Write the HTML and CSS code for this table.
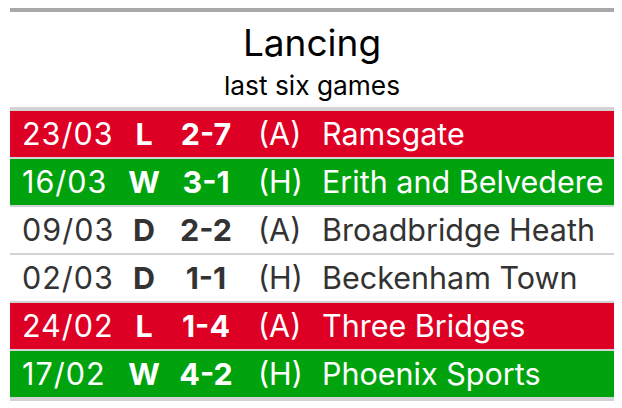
FILE: index.html
```html
<!DOCTYPE html>
<html>
<head>
<meta charset="utf-8">
<link rel="stylesheet" href="styles.css">
</head>
<body>
<div class="card">
  <div class="heading">
    <div class="title">Lancing</div>
    <div class="subtitle">last six games</div>
  </div>
  <table class="games">
    <colgroup>
      <col class="c-date"><col class="c-res"><col class="c-score"><col class="c-venue"><col class="c-team">
    </colgroup>
    <tbody>
      <tr class="loss"><td class="date">23/03</td><td class="res">L</td><td class="score">2-7</td><td class="venue">(A)</td><td class="team">Ramsgate</td></tr>
      <tr class="win"><td class="date">16/03</td><td class="res">W</td><td class="score">3-1</td><td class="venue">(H)</td><td class="team">Erith and Belvedere</td></tr>
      <tr class="draw"><td class="date">09/03</td><td class="res">D</td><td class="score">2-2</td><td class="venue">(A)</td><td class="team">Broadbridge Heath</td></tr>
      <tr class="draw"><td class="date">02/03</td><td class="res">D</td><td class="score">1-1</td><td class="venue">(H)</td><td class="team">Beckenham Town</td></tr>
      <tr class="loss"><td class="date">24/02</td><td class="res">L</td><td class="score">1-4</td><td class="venue">(A)</td><td class="team">Three Bridges</td></tr>
      <tr class="win"><td class="date">17/02</td><td class="res">W</td><td class="score">4-2</td><td class="venue">(H)</td><td class="team">Phoenix Sports</td></tr>
    </tbody>
  </table>
</div>
</body>
</html>
```

FILE: styles.css
```css
html, body {
  margin: 0;
  padding: 0;
  background: #ffffff;
}
body {
  font-family: "Inter", "Roboto", "Liberation Sans", sans-serif;
}
.card {
  margin: 8px 0 0 10px;
  width: 604px;
  border-top: 4px solid #a8a8a8;
}
.heading {
  text-align: center;
  color: #000;
  border-bottom: 4px solid #d3d3d3;
  height: 99px;
  box-sizing: border-box;
  padding-top: 10px;
}
.title {
  font-size: 37px;
  line-height: 42px;
  font-weight: 400;
  margin-bottom: 5px;
}
.subtitle {
  font-size: 26.3px;
  line-height: 34px;
  font-weight: 400;
}
.games {
  width: 604px;
  border-collapse: collapse;
  table-layout: fixed;
  border-bottom: 4px solid #d3d3d3;
}
.c-date { width: 110px; }
.c-res { width: 48px; }
.c-score { width: 76px; }
.c-venue { width: 78px; }
.c-team { width: auto; }
.games td {
  height: 46px;
  padding: 0;
  font-size: 30.5px;
  line-height: 46px;
  white-space: nowrap;
  vertical-align: middle;
}
.games tr + tr td {
  border-top: 2px solid #d3d3d3;
}
.date { padding-left: 12px !important; letter-spacing: 1px; }
.res { text-align: center; font-weight: 700; }
.score { text-align: center; font-weight: 700; }
.venue { padding-left: 14px !important; }
.loss { background: #de0024; color: #ffffff; }
.win { background: #00a30d; color: #ffffff; }
.draw { background: #ffffff; color: #333333; }
```
